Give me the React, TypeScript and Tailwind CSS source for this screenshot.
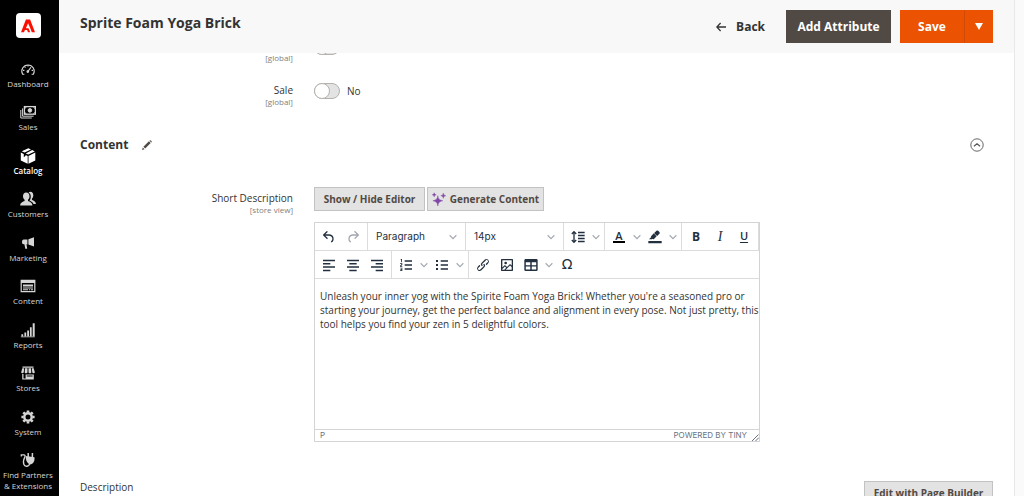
/**
 * Product edit page: admin menu, page actions and the content section
 * with the short description WYSIWYG editor.
 */
import React, { useState } from 'react';

interface MenuItem {
    id: string;
    label: string;
    icon: React.ReactNode;
}

const MENU: MenuItem[] = [
    {
        id: 'dashboard',
        label: 'Dashboard',
        icon: (
            <g fill="none" stroke="currentColor" strokeWidth="1.1">
                <path d="M4.4 13.2H2.6A6.2 6.2 0 1 1 13.4 13.2H11.6" />
                <path d="M8 4v1.4M4.6 5.6l.9.9M3 9.4h1.4M11.6 9.4H13M8 10.4l3-4.2" />
                <circle cx="7.8" cy="10.6" r="0.8" fill="currentColor" />
            </g>
        ),
    },
    {
        id: 'sales',
        label: 'Sales',
        icon: (
            <g fill="none" stroke="currentColor" strokeWidth="1">
                <path d="M.8 6v8h11M2.6 4.4v7.8h11" />
                <rect x="4.4" y="2.6" width="11" height="7.6" strokeWidth="1.3" />
                <path d="M4.4 5l2.2-2.4M13.2 2.6L15.4 5M4.4 8l2.2 2.2M13.2 10.2L15.4 8" />
                <circle cx="9.9" cy="6.4" r="1.8" fill="currentColor" />
            </g>
        ),
    },
    {
        id: 'catalog',
        label: 'Catalog',
        icon: (
            <path
                fill="currentColor"
                d="M8.4.2l2.6 1.3-6.4 3.1L1.7 3.3zM12.2 2.1l2.6 1.3-6.6 3.2-2.5-1.2zM.8 4.6l3 1.5v3.1l1.8-1.4V7l2.1 1v7.8L.8 12.4zM15.3 4.6v7.8l-6.8 3.4V8z"
            />
        ),
    },
    {
        id: 'customers',
        label: 'Customers',
        icon: (
            <g fill="currentColor">
                <path d="M6.2 1.4C4.2 1.4 3 2.9 3 5c0 1.6.6 3 1.6 3.8v1.3C2.8 10.9.4 11.6.2 14.4h12.2c-.2-2.8-2.6-3.5-4.4-4.3V8.8C9 8 9.5 6.6 9.5 5c0-2.1-1.2-3.6-3.3-3.6z" />
                <path d="M8.6 1.4c.5-.4 1.1-.6 1.8-.6 1.8 0 2.9 1.3 2.9 3.4 0 1.5-.5 2.7-1.4 3.5v1.1c1.6.8 3.9 1.6 4 4.2h-2.4c-.6-1.9-2.3-2.8-4-3.6.9-.9 1.3-2.3 1.3-4 0-1.8-.8-3.3-2.2-4z" />
            </g>
        ),
    },
    {
        id: 'marketing',
        label: 'Marketing',
        icon: (
            <path
                fill="currentColor"
                d="M14 2.2v9.2L8.4 9.5V4.3zM7.4 4.5v4.9l-.9-.1.7 4.5H5.3L4.4 9.3h-.6C2.6 9.3 2 8.3 2 7s.6-2.4 1.8-2.4z"
            />
        ),
    },
    {
        id: 'content',
        label: 'Content',
        icon: (
            <path
                fill="currentColor"
                fillRule="evenodd"
                d="M.6 1.8h14.8v12.4H.6zM1.8 5v8h12.4V5zM3 6.6h10v1.8H3zM3 9.6h10v.8H3zM3 11.2h5v1H3zM9 11.2h1.2v1H9zM11 11.2h2v1h-2z"
            />
        ),
    },
    {
        id: 'reports',
        label: 'Reports',
        icon: (
            <path
                fill="currentColor"
                d="M1.4 12.2h1.8v2H1.4zM4.4 10.4h1.8v3.8H4.4zM7.2 8.4H9v5.8H7.2zM9.9 5.2h1.8v9H9.9zM12.7 1.2h2v13h-2zM.8 14.4h14v.8H.8z"
            />
        ),
    },
    {
        id: 'stores',
        label: 'Stores',
        icon: (
            <path
                fill="currentColor"
                fillRule="evenodd"
                d="M2.5 1.6h11v1.2h-11zM2.3 3.3h1.9L3.7 7.5c-.3 1-2.5.8-2.5-.3zM5 3.3h2.5v4.2c-.4 1-2.8 1-2.8 0zM8.5 3.3H11l.3 4.2c0 1-2.5 1-2.8 0zM11.8 3.3h1.9l1.1 3.9c0 1.1-2.2 1.3-2.5.3zM2.2 9h1.3v4.4h2.1V9.6h8.2v5H2.2zM6.8 10.4v1h5.8v-1z"
            />
        ),
    },
    {
        id: 'system',
        label: 'System',
        icon: (
            <g fill="none" stroke="currentColor">
                <circle cx="8" cy="8" r="3.7" strokeWidth="2.4" />
                <path
                    strokeWidth="2.6"
                    d="M8 1.4v2.2M8 12.4v2.2M1.4 8h2.2M12.4 8h2.2M3.3 3.3l1.6 1.6M11.1 11.1l1.6 1.6M3.3 12.7l1.6-1.6M11.1 4.9l1.6-1.6"
                />
            </g>
        ),
    },
    {
        id: 'partners',
        label: 'Find Partners & Extensions',
        icon: (
            <g fill="none" stroke="currentColor" strokeWidth="1.3">
                <path d="M1.3 4.6V2.8h2.5c1.3 0 1.6 1 1 2.2-1.4 2.8-1.8 5-1 7.3 1 2.8 5.4 2.8 6-1.3" />
                <path d="M8.2 1v4M12.4 1v4" strokeWidth="1.5" />
                <path fill="currentColor" stroke="none" d="M5.8 4l8.7 1.2c.3 3.6-.8 6.3-4 7.3-3.3-.9-5-4-4.7-8.5z" />
            </g>
        ),
    },
];

// editor toolbar drawings, on a 24 unit grid
const ICONS = {
    undo: 'M6.4 8H12c3.7 0 6.2 2 6.8 5.1.6 2.7-.4 5.6-2.3 6.8a1 1 0 01-1-1.8c1.1-.6 1.8-2.7 1.4-4.6-.5-2.1-2.1-3.5-4.9-3.5H6.4l3.3 3.3a1 1 0 11-1.4 1.4l-5-5a1 1 0 010-1.4l5-5a1 1 0 011.4 1.4L6.4 8z',
    redo: 'M17.6 10H12c-2.8 0-4.4 1.4-4.9 3.5-.4 2 .3 4 1.4 4.6a1 1 0 11-1 1.8c-2-1.2-2.9-4.1-2.3-6.8.6-3 3-5.1 6.8-5.1h5.6l-3.3-3.3a1 1 0 111.4-1.4l5 5a1 1 0 010 1.4l-5 5a1 1 0 01-1.4-1.4l3.3-3.3z',
    lineHeight:
        'M12 4h10v2.2H12zM12 8.6h10v2.2H12zM12 13.2h10v2.2H12zM12 17.8h10V20H12zM6 2.6l4 4.1-1.4 1.4L7 6.5v11l1.6-1.6L10 17.3l-4 4.1-4-4.1 1.4-1.4L5 17.5v-11L3.4 8.1 2 6.7z',
    highlight: 'M7.5 15.5H3l3.4-3.4-.6-.8L10.2 6.5l4.2 4.3-4.2 4.5c-.2.2-.6.2-.8 0l-.6-.7zM13 8.5L10.8 6l3.4-3.2a2 2 0 012.6 0L18.6 4.5c.7.7.7 2 0 2.7l-3.3 3.4zM2 18h20v3.5H2z',
    alignLeft: 'M3 4h18v2.2H3zM3 9h11v2.2H3zM3 14h18v2.2H3zM3 19h11v2.2H3z',
    alignCenter: 'M3 4h18v2.2H3zM6.5 9h11v2.2h-11zM3 14h18v2.2H3zM6.5 19h11v2.2h-11z',
    alignRight: 'M3 4h18v2.2H3zM10 9h11v2.2H10zM3 14h18v2.2H3zM10 19h11v2.2H10z',
    numbered: 'M10 5h11v2H10zM10 11h11v2H10zM10 17h11v2H10zM4 3h2v5H4.7V4.3H4zM3 9.5h3.5v2.2L4.6 13.5h1.9v1H3v-1.2l2-2v-.8H3zM3 16h3.5v5H3v-1h2.2v-1H3.5v-1h1.7v-1H3z',
    bullets: 'M10 5h11v2H10zM10 11h11v2H10zM10 17h11v2H10zM3 4.5h3v3H3zM3 10.5h3v3H3zM3 16.5h3v3H3z',
    link: 'M6.2 12.3a1 1 0 011.4 1.4l-2.1 2a2 2 0 102.7 2.8l4.8-4.8a1 1 0 000-1.4 1 1 0 111.4-1.3 2.9 2.9 0 010 4L9.6 20a3.9 3.9 0 01-5.5-5.5l2-2zm11.6-.6a1 1 0 01-1.4-1.4l2-2a2 2 0 10-2.6-2.8L11 10.3a1 1 0 000 1.4A1 1 0 119.6 13a2.9 2.9 0 010-4L14.4 4a3.9 3.9 0 015.5 5.5l-2 2z',
    image: 'M5 15.7l3.3-3.2c.3-.3.7-.3 1 0L12 15l4.1-4c.3-.4.8-.4 1 0l2 1.9V5H5v10.7zM5 18v1h3l2.8-2.9-2-2L5 17.9zm14-3l-2.5-2.4-6.4 6.5H19v-4zM4 3h16c.6 0 1 .4 1 1v16c0 .6-.4 1-1 1H4a1 1 0 01-1-1V4c0-.6.4-1 1-1zm6 8a2 2 0 100-4 2 2 0 000 4z',
    table: 'M20 3a2 2 0 012 2v14a2 2 0 01-2 2H4a2 2 0 01-2-2V5c0-1.1.9-2 2-2h16zM4.2 14.3v4.5h6.7v-4.5zm15.6 0h-6.7v4.5h6.7zm0-6.3h-6.7v4.3h6.7zM4.2 12.3h6.7V8H4.2z',
};

function Chevron() {
    return (
        <svg viewBox="0 0 10 10" className="size-2 shrink-0 text-[#a3a8b0]" fill="none" stroke="currentColor" strokeWidth="1.4">
            <path d="M.8 2.8L5 7l4.2-4.2" />
        </svg>
    );
}

function Tool({ name, title, muted }: { name: keyof typeof ICONS; title: string; muted?: boolean }) {
    return (
        <button type="button" title={title} className={`flex h-6 w-6 items-center justify-center ${muted ? 'text-[#a3a8b0]' : 'text-[#222f3e]'}`}>
            <svg viewBox="0 0 24 24" className="size-4" fill="currentColor" fillRule="evenodd">
                <path d={ICONS[name]} />
            </svg>
        </button>
    );
}

function Drop({ title }: { title: string }) {
    return (
        <button type="button" title={title} className="flex h-6 w-3 items-center justify-center">
            <Chevron />
        </button>
    );
}

function ToolGroup({ children }: { children: React.ReactNode }) {
    return <div className="flex h-[27px] shrink-0 items-center border-r border-[#dcdcdc] px-0.5">{children}</div>;
}

function ToolSelect({ label, options }: { label: string; options: string[] }) {
    return (
        <div className="relative flex h-[27px] w-[98px] shrink-0 items-center border-r border-[#dcdcdc]">
            <select aria-label={label} className="h-full w-full appearance-none bg-transparent pl-2 font-[Inter,sans-serif] text-[10px] text-[#222f3e] outline-none">
                {options.map(o => <option key={o}>{o}</option>)}
            </select>
            <span className="pointer-events-none absolute right-2">
                <Chevron />
            </span>
        </div>
    );
}

function FieldLabel({ label, scope, htmlFor }: { label?: string; scope: string; htmlFor?: string }) {
    return (
        <label htmlFor={htmlFor} className="flex w-[213px] shrink-0 flex-col items-end">
            <span className="h-3.5 text-[10px] leading-[14px]">{label}</span>
            <span className="text-[8px] leading-[10px] text-[#808080]">{scope}</span>
        </label>
    );
}

function Toggle({ id, label }: { id: string; label?: string }) {
    const [on, setOn] = useState(false);

    return (
        <div className="mb-7 flex h-4 items-start gap-[21px]">
            <FieldLabel label={label} scope="[global]" htmlFor={id} />
            <div className="flex items-center gap-[7px]">
                <span className={`relative h-4 w-[26px] rounded-full border border-[#b5b1ac] ${on ? 'bg-[#79a22e]' : 'bg-[#e3e3e3]'}`}>
                    <input id={id} type="checkbox" checked={on} onChange={e => setOn(e.target.checked)} className="absolute inset-0 z-10 opacity-0" />
                    <span className={`absolute -top-px size-4 rounded-full border border-[#b5b1ac] bg-white ${on ? '-right-px' : '-left-px'}`} />
                </span>
                {label && <span className="text-[10px] leading-4">{on ? 'Yes' : 'No'}</span>}
            </div>
        </div>
    );
}

export default function App() {
    const [active, setActive] = useState('catalog');
    const [showEditor, setShowEditor] = useState(true);
    const [text, setText] = useState(
        "Unleash your inner yog with the Spirite Foam Yoga Brick! Whether you're a seasoned pro or starting your journey, get the perfect balance and alignment in every pose. Not just pretty, this tool helps you find your zen in 5 delightful colors."
    );

    return (
        <div className="flex h-screen overflow-hidden bg-white font-['Open_Sans',sans-serif] text-[#333333]">
            {/* Admin menu */}
            <aside className="flex w-[59px] shrink-0 flex-col bg-black pr-[3px] pb-[5px]">
                <a href="#" aria-label="Admin home" className="mx-auto mt-[13px] flex h-[25px] w-[25px] items-center justify-center rounded bg-white">
                    <svg viewBox="0 0 14 14" className="size-3.5" fill="#fa0f00">
                        <path d="M4.9.5h4.2L14 13.2h-3.2L9.5 9.7 7.1 4.3 4.9 9.2h2.6l1.7 4H7l-.9-2.1H3.9L3 13.2H0z" />
                    </svg>
                </a>
                <nav className="mt-[23px] flex flex-1 flex-col justify-between">
                    {MENU.map(item => (
                        <a
                            key={item.id}
                            href={`#${item.id}`}
                            onClick={() => setActive(item.id)}
                            className={`flex flex-col items-center gap-px text-center text-[8px] leading-[11px] ${active === item.id ? 'font-semibold text-white' : 'text-[#d6d6d6]'}`}
                        >
                            <svg viewBox="0 0 16 16" className="size-4 shrink-0">{item.icon}</svg>
                            {item.label}
                        </a>
                    ))}
                </nav>
            </aside>

            <main className="flex min-w-0 flex-1 flex-col">
                {/* Page actions */}
                <header className="z-10 flex h-[53px] shrink-0 items-center justify-between bg-[#f8f8f8] px-[21px]">
                    <h1 className="pb-2 text-[14px] font-bold">Sprite Foam Yoga Brick</h1>
                    <div className="flex h-[33px] text-[12px] font-bold">
                        <button type="button" className="mr-[21px] flex items-center gap-2.5">
                            <svg viewBox="0 0 10 10" className="size-2.5" fill="none" stroke="currentColor" strokeWidth="1.3">
                                <path d="M10 5H1M4.6 1L.8 5l3.8 4" />
                            </svg>
                            Back
                        </button>
                        <button type="button" className="mr-[9px] w-[105px] bg-[#514943] text-white">Add Attribute</button>
                        <button type="button" className="w-[65px] border-r border-[#d04a06] bg-[#eb5202] text-white">Save</button>
                        <button type="button" aria-label="More save options" className="flex w-7 items-center justify-center bg-[#eb5202] text-white">
                            <svg viewBox="0 0 8 7" className="h-[7px] w-2" fill="currentColor">
                                <path d="M0 0h8L4 7z" />
                            </svg>
                        </button>
                    </div>
                </header>

                <div className="min-h-0 flex-1 overflow-hidden px-[21px]">
                    <div className="-mt-3.5">
                        <Toggle id="new" />
                        <Toggle id="sale" label="Sale" />
                    </div>

                    {/* Content section */}
                    <div className="mt-9 flex h-5 items-center">
                        <h2 className="text-[12px] font-bold">Content</h2>
                        <svg viewBox="0 0 10 10" className="ml-3.5 size-2.5" fill="#514943">
                            <path d="M0 10l.8-2.6 1.8 1.8zM1.4 6.8L6.9 1.3l1.8 1.8-5.5 5.5zM7.5.7l.5-.5c.5-.4 2.2 1.3 1.8 1.8l-.5.5z" />
                        </svg>
                        <button type="button" aria-label="Collapse section" className="mr-[9px] ml-auto">
                            <svg viewBox="0 0 14 14" className="size-3.5" fill="none" stroke="#555" strokeWidth="0.9">
                                <circle cx="7" cy="7" r="6.2" />
                                <path d="M3.9 8.2L7 5.8l3.1 2.4" strokeWidth="1.2" />
                            </svg>
                        </button>
                    </div>

                    <div className="mt-8 flex gap-[21px]">
                        <div className="pt-1">
                            <FieldLabel label="Short Description" scope="[store view]" htmlFor="short-description" />
                        </div>
                        <div className="min-w-0 max-w-[446px] flex-1">
                            <div className="flex gap-0.5 text-[10px] font-bold text-[#514943]">
                                <button type="button" onClick={() => setShowEditor(!showEditor)} className="h-6 w-[111px] border border-[#c2c2c2] bg-[#e3e3e3]">
                                    Show / Hide Editor
                                </button>
                                <button type="button" className="flex h-6 w-[117px] items-center justify-center gap-1 border border-[#c2c2c2] bg-[#e3e3e3]">
                                    <svg viewBox="0 0 12 12" className="size-3.5 shrink-0" fill="#8147a8" stroke="#8147a8" strokeWidth="0.4">
                                        <path d="M5 3.2c.3 2.6 1.3 3.7 4.2 4.3C6.3 8.1 5.3 9.2 5 12c-.3-2.8-1.3-3.9-4.2-4.5C3.7 6.9 4.7 5.8 5 3.2zM9.7 1c.2 1.3.7 1.9 2.1 2.2-1.4.3-1.9.9-2.1 2.2-.2-1.3-.7-1.9-2.1-2.2C9 2.900 9.500 2.300 9.700 1zM1.900.7c.2 1 .6 1.500 1.700 1.700-1.100.2-1.500.7-1.700 1.700C1.700 3.100 1.300 2.600.2 2.400 1.300 2.200 1.700 1.700 1.900.7z" />
                                    </svg>
                                    Generate Content
                                </button>
                            </div>

                            <div className="mt-[11px] border border-[#d4d4d4]">
                                {showEditor && (
                                    <>
                                        <div className="flex border-b border-[#dcdcdc]">
                                            <ToolGroup>
                                                <Tool name="undo" title="Undo" />
                                                <Tool name="redo" title="Redo" muted />
                                            </ToolGroup>
                                            <ToolSelect label="Block format" options={['Paragraph', 'Heading 1', 'Heading 2']} />
                                            <ToolSelect label="Font size" options={['14px', '16px', '18px']} />
                                            <ToolGroup>
                                                <Tool name="lineHeight" title="Line height" />
                                                <Drop title="Line height options" />
                                            </ToolGroup>
                                            <ToolGroup>
                                                <button type="button" title="Text color" className="flex h-6 w-6 flex-col items-center justify-center text-[#222f3e]">
                                                    <span className="text-[11px] leading-[10px] font-semibold">A</span>
                                                    <span className="h-0.5 w-3 bg-black" />
                                                </button>
                                                <Drop title="Text color options" />
                                                <Tool name="highlight" title="Background color" />
                                                <Drop title="Background color options" />
                                            </ToolGroup>
                                            <ToolGroup>
                                                <button type="button" title="Bold" className="h-6 w-6 text-[12px] font-bold text-[#222f3e]">B</button>
                                                <button type="button" title="Italic" className="h-6 w-6 font-['Liberation_Serif',serif] text-[14px] text-[#222f3e] italic">I</button>
                                                <button type="button" title="Underline" className="h-6 w-6 text-[11px] font-semibold text-[#222f3e] underline underline-offset-2">U</button>
                                            </ToolGroup>
                                        </div>
                                        <div className="flex border-b border-[#dcdcdc]">
                                            <ToolGroup>
                                                <Tool name="alignLeft" title="Align left" />
                                                <Tool name="alignCenter" title="Align center" />
                                                <Tool name="alignRight" title="Align right" />
                                            </ToolGroup>
                                            <ToolGroup>
                                                <Tool name="numbered" title="Numbered list" />
                                                <Drop title="Numbered list options" />
                                                <Tool name="bullets" title="Bullet list" />
                                                <Drop title="Bullet list options" />
                                            </ToolGroup>
                                            <div className="flex h-[27px] items-center px-0.5">
                                                <Tool name="link" title="Insert link" />
                                                <Tool name="image" title="Insert image" />
                                                <Tool name="table" title="Table" />
                                                <Drop title="Table options" />
                                                <button type="button" title="Special character" className="h-6 w-6 font-['DejaVu_Sans',sans-serif] text-[14px] text-[#222f3e]">Ω</button>
                                            </div>
                                        </div>
                                    </>
                                )}
                                <textarea
                                    id="short-description"
                                    value={text}
                                    onChange={e => setText(e.target.value)}
                                    className="block h-[150px] w-full resize-none py-2.5 pl-[5px] text-[10px] leading-[14px] outline-none"
                                />
                                <div className="relative flex h-3 items-center justify-between border-t border-[#d4d4d4] pr-3 pl-[5px] font-[Inter,sans-serif] text-[8px] leading-[11px] text-[#697380]">
                                    <span>P</span>
                                    <a href="#tiny">POWERED BY TINY</a>
                                    <svg viewBox="0 0 7 7" className="absolute right-0 bottom-0 size-[7px]" fill="none" stroke="currentColor">
                                        <path d="M0 7L6.5.5M3.5 7L7 3.5" />
                                    </svg>
                                </div>
                            </div>
                        </div>
                    </div>

                    <div className="mt-[38px] flex justify-between">
                        <div className="flex flex-col">
                            <span className="text-[10px] leading-[14px]">Description</span>
                            <span className="text-[8px] leading-[10px] text-[#808080]">[store view]</span>
                        </div>
                        <button type="button" className="mt-px h-6 w-[129px] border border-[#c2c2c2] bg-[#e3e3e3] text-[10px] font-bold text-[#514943]">
                            Edit with Page Builder
                        </button>
                    </div>
                </div>
            </main>

            {/* Scrollbar track */}
            <div className="w-2.5 shrink-0 border-l border-[#e8e8e8] bg-[#fafafa]" />
        </div>
    );
}
